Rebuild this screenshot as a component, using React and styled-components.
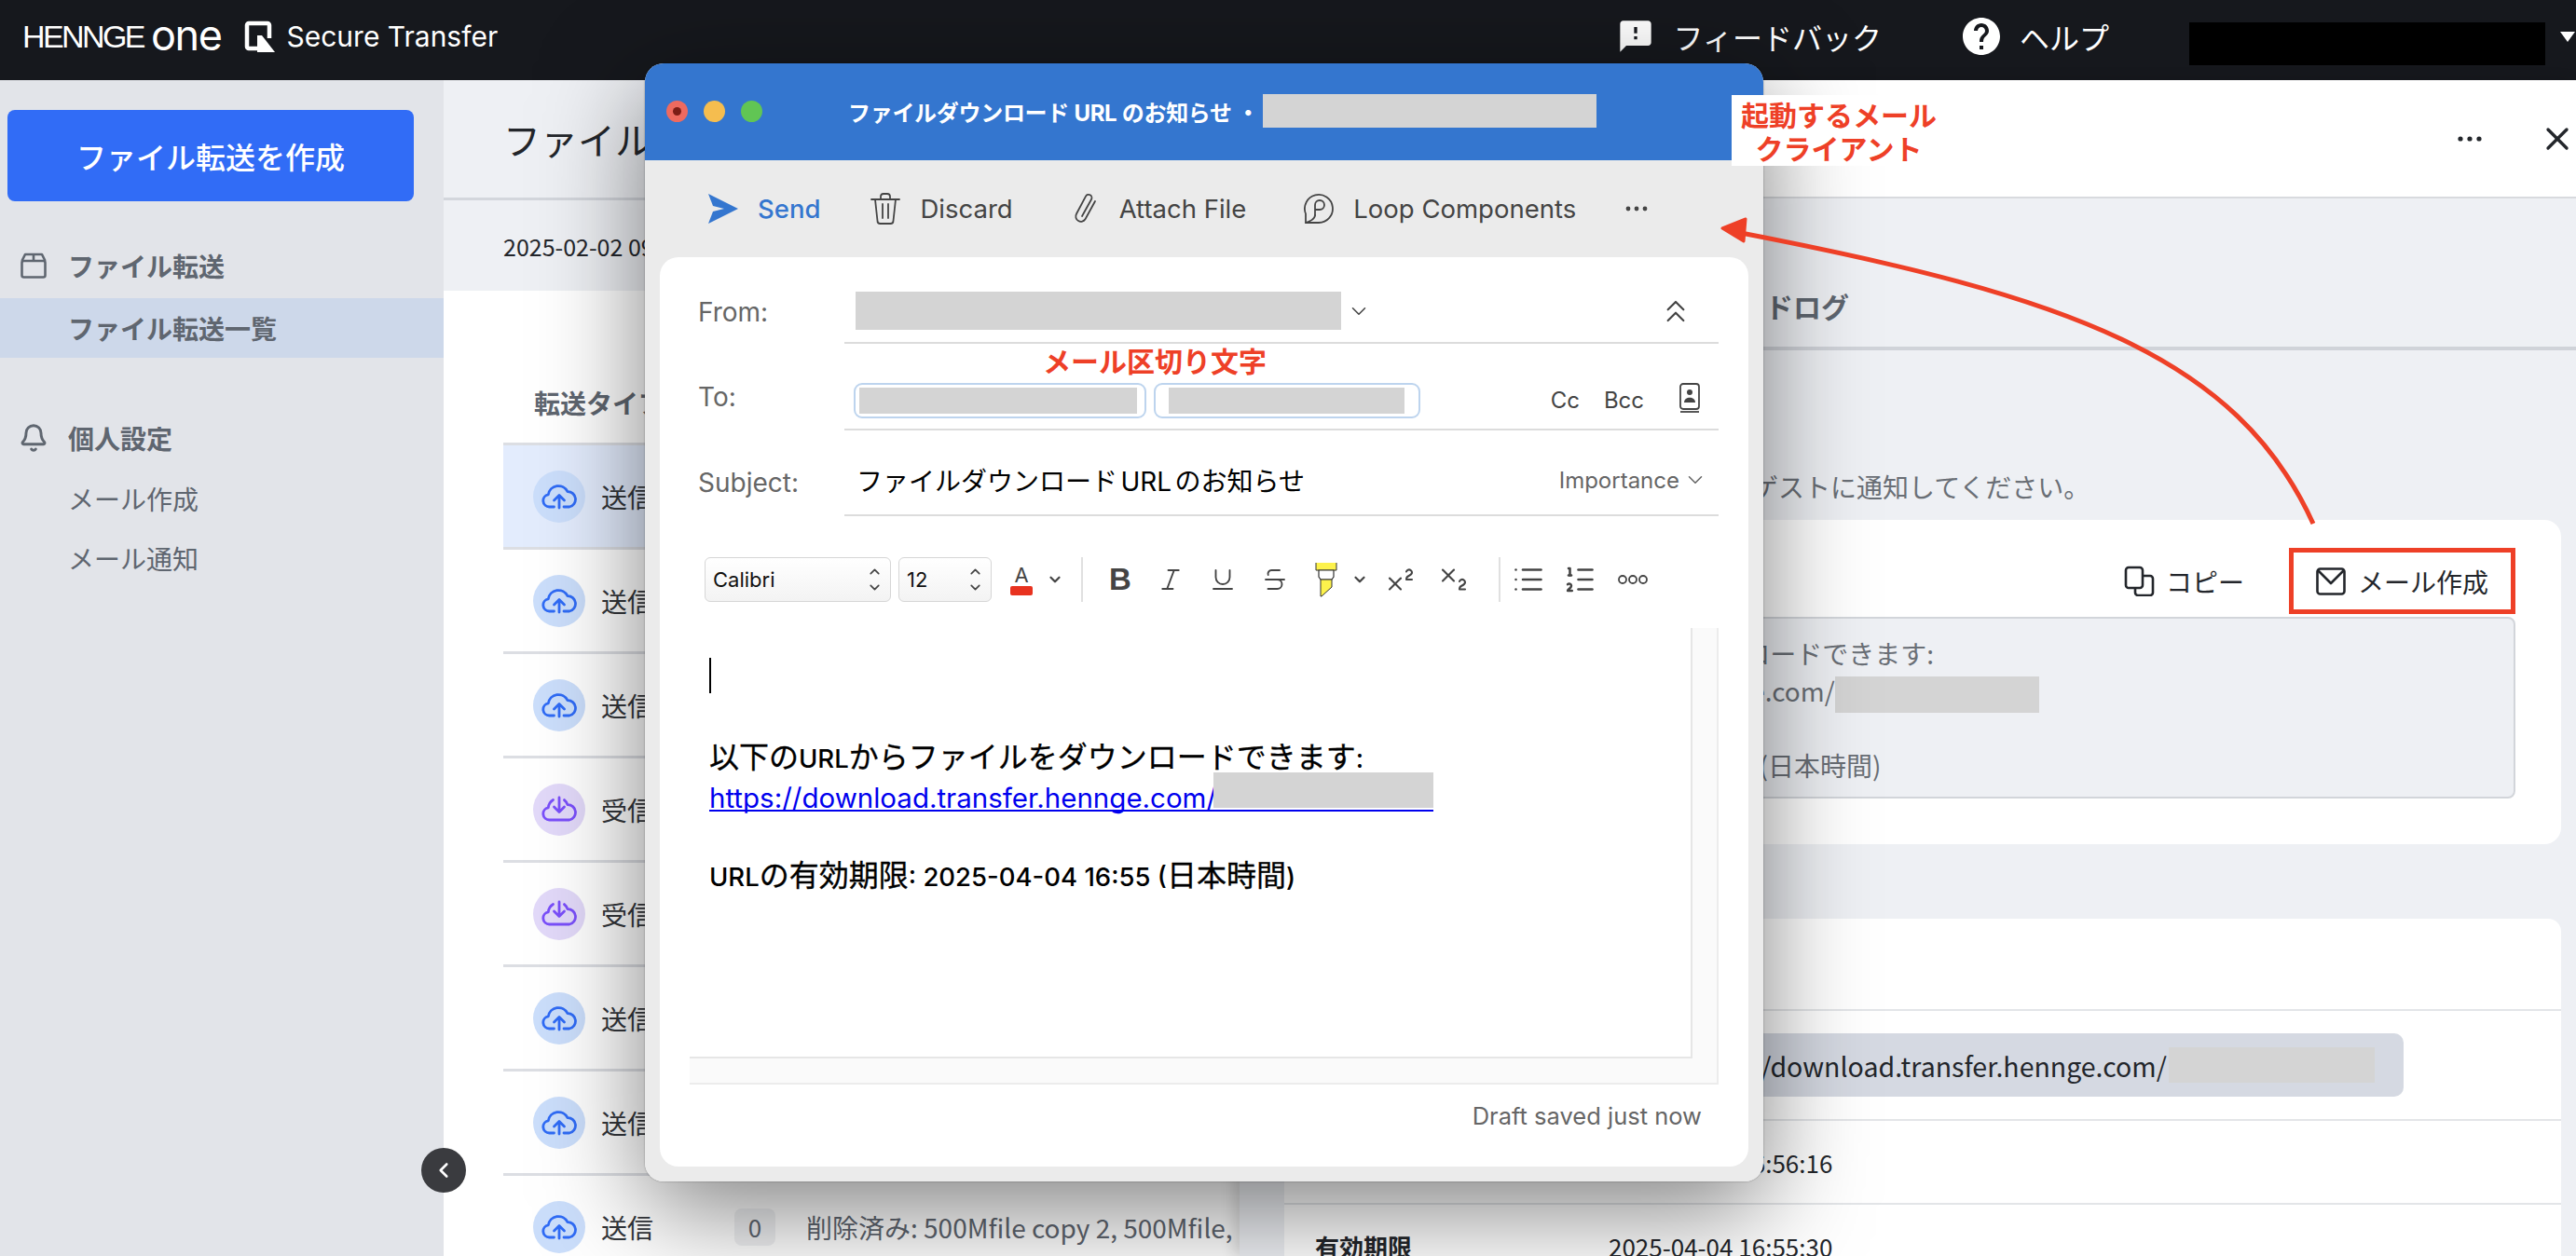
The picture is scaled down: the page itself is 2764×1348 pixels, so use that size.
import React from 'react';
import styled, { createGlobalStyle } from 'styled-components';
import { MdFeedback, MdHelp } from 'react-icons/md';
import {
	Bell,
	ChevronDown,
	ChevronLeft,
	ChevronUp,
	ChevronsUp,
	Italic,
	List,
	ListOrdered,
	Strikethrough,
	Subscript,
	Superscript,
	Underline,
	X,
} from 'lucide-react';

const jp = '"Noto Sans CJK JP", "Noto Sans", sans-serif';
const ui = 'Inter, "Noto Sans CJK JP", sans-serif';

const GlobalStyle = createGlobalStyle`
	html, body { margin: 0; padding: 0; background: #fff; }
	* { box-sizing: border-box; }
`;

const Page = styled.div`
	position: relative;
	width: 2764px;
	height: 1348px;
	overflow: hidden;
	display: flex;
	flex-direction: column;
	font-family: ${jp};
`;

/* top bar */
const Header = styled.header`
	flex: 0 0 86px;
	display: flex;
	align-items: center;
	background: #16181d;
	color: #fff;
	padding: 0 1px 8px 24px;
`;
const LogoWord = styled.span`
	font-family: "Liberation Sans", sans-serif;
	font-size: 34px;
	letter-spacing: -2.6px;
	line-height: 1;
`;
const LogoOne = styled.span`
	font-family: Inter, sans-serif;
	font-size: 45px;
	font-weight: 400;
	letter-spacing: -1.4px;
	line-height: 1;
	margin: 0 0 4px 8px;
`;
const ProductIcon = styled.svg`
	width: 33px;
	height: 34px;
	margin-left: 25px;
`;
const ProductName = styled.span`
	font-family: Inter, sans-serif;
	font-size: 30px;
	margin-left: 12px;
`;
const HeaderRight = styled.div`
	margin-left: auto;
	display: flex;
	align-items: center;
	font-size: 32px;
`;
const HeaderLink = styled.div`
	display: flex;
	align-items: center;
	gap: ${(p) => p.$gap}px;
	margin-right: ${(p) => p.$after}px;
`;
const BlackBar = styled.div`
	width: 382px;
	height: 46px;
	margin-top: 16px;
	background: #000;
`;
const Caret = styled.div`
	width: 0;
	height: 0;
	margin-left: 16px;
	border-left: 8px solid transparent;
	border-right: 8px solid transparent;
	border-top: 11px solid #fff;
`;

const Body = styled.div`
	flex: 1;
	display: flex;
	min-height: 0;
`;

/* left menu */
const Sidebar = styled.nav`
	flex: 0 0 476px;
	background: #e2e4e9;
	padding-top: 32px;
	color: #5f6670;
`;
const CreateButton = styled.div`
	margin-left: 8px;
	width: 436px;
	height: 98px;
	border-radius: 8px;
	background: #316cf6;
	color: #fff;
	font-size: 32px;
	font-weight: 500;
	display: flex;
	align-items: center;
	justify-content: center;
`;
const MenuTitle = styled.div`
	height: 64px;
	margin-top: ${(p) => p.$top}px;
	padding-left: 22px;
	display: flex;
	align-items: center;
	gap: 23px;
	font-size: 28px;
	font-weight: 700;
`;
const MenuBell = styled(Bell)`
	margin: 0 -2px;
`;
const MenuItem = styled.div`
	height: 64px;
	margin-top: ${(p) => p.$top || 0}px;
	padding-left: 73px;
	display: flex;
	align-items: center;
	font-size: 28px;
	font-weight: ${(p) => (p.$active ? 700 : 400)};
	background: ${(p) => (p.$active ? '#cdd8ea' : 'transparent')};
`;

/* transfer list */
const ListPane = styled.main`
	flex: 0 0 854px;
	display: flex;
	flex-direction: column;
	background: #fff;
	& > * {
		flex: none;
	}
`;
const ListTitleBar = styled.div`
	height: 129px;
	padding: 0 0 0 64px;
	display: flex;
	align-items: center;
	background: #eef0f4;
	border-bottom: 3px solid #d3d6dc;
	font-size: 40px;
	color: #23262b;
`;
const DateBar = styled.div`
	height: 97px;
	padding-left: 64px;
	display: flex;
	align-items: center;
	background: #eef0f4;
	font-size: 25px;
	color: #23262b;
`;
const ListTable = styled.div`
	margin-left: 64px;
`;
const ListHead = styled.div`
	height: 166px;
	padding: 100px 0 0 33px;
	border-bottom: 3px solid #dcdee3;
	font-size: 28px;
	font-weight: 700;
	color: #5f6670;
`;
const Row = styled.div`
	height: 112px;
	padding-left: 32px;
	display: flex;
	align-items: center;
	background: ${(p) => (p.$selected ? '#e3ecfd' : '#fff')};
	border-bottom: 3px solid #dcdee3;
	font-size: 28px;
	color: #33363b;
`;
const Circle = styled.div`
	width: 56px;
	height: 56px;
	border-radius: 50%;
	display: flex;
	align-items: center;
	justify-content: center;
	background: ${(p) => (p.$down ? '#e2d9f9' : '#cbdefb')};
	color: ${(p) => (p.$down ? '#7a4ffa' : '#2f6bf5')};
	margin-right: 17px;
`;
const TypeLabel = styled.span`
	width: 143px;
`;
const CountBadge = styled.span`
	width: 44px;
	height: 40px;
	border-radius: 8px;
	background: #f0f1f3;
	color: #5f6670;
	font-size: 26px;
	display: flex;
	align-items: center;
	justify-content: center;
	margin-right: 33px;
`;
const RowNote = styled.span`
	font-size: 28px;
	color: #5f6670;
	white-space: nowrap;
`;

/* detail drawer */
const Drawer = styled.aside`
	flex: 1;
	position: relative;
	display: flex;
	flex-direction: column;
	background: #eef0f4;
	box-shadow: -6px 0 14px rgba(0, 0, 0, 0.14);
	& > * {
		flex: none;
	}
`;
const DrawerTop = styled.div`
	height: 127px;
	background: #fff;
	border-bottom: 2px solid #d8dade;
	display: flex;
	align-items: center;
	justify-content: flex-end;
	gap: 59px;
	padding: 0;
	color: #23262b;
`;
const Tabs = styled.div`
	height: 163px;
	padding: 0 0 22px 414px;
	display: flex;
	align-items: flex-end;
	border-bottom: 4px solid #d0d3d9;
	font-size: 30px;
	font-weight: 700;
	color: #5f6670;
`;
const Hint = styled.div`
	height: 182px;
	padding: 124px 0 0 550px;
	font-size: 28px;
	line-height: 44px;
	color: #6a6f76;
	white-space: nowrap;
`;
const ShareCard = styled.section`
	height: 348px;
	margin: 0 16px 80px 48px;
	background: #fff;
	border-radius: 18px;
	padding: 30px 49px 0 48px;
`;
const ShareActions = styled.div`
	display: flex;
	justify-content: flex-end;
	align-items: center;
	gap: 48px;
`;
const ActionText = styled.span`
	font-size: 28px;
	color: #23262b;
`;
const CopyAction = styled.div`
	display: flex;
	align-items: center;
	gap: 12px;
`;
const MailAction = styled.div`
	width: 243px;
	height: 71px;
	padding-left: 24px;
	border: 5px solid #ee4027;
	display: flex;
	align-items: center;
	gap: 13px;
`;
const MessageBox = styled.div`
	height: 195px;
	margin-top: 3px;
	padding: 17px 0 0 26px;
	background: #eef0f4;
	border: 2px solid #d2d5da;
	border-radius: 8px;
	font-size: 28px;
	line-height: 40px;
	color: #6a6f76;
	white-space: nowrap;
`;
const MessageLine = styled.div`
	height: 40px;
`;
const InfoCard = styled.section`
	flex: 1 1 auto !important;
	margin: 0 16px 0 48px;
	background: #fff;
	border-radius: 14px 14px 0 0;
`;
const InfoRow = styled.div`
	height: ${(p) => p.$h}px;
	display: flex;
	align-items: center;
	padding-left: 33px;
	border-top: ${(p) => (p.$first ? 'none' : '2px solid #e3e5e8')};
	font-size: 26px;
	color: #23262b;
`;
const InfoLabel = styled.span`
	flex: 0 0 315px;
	font-weight: 700;
`;
const LinkPill = styled.div`
	height: 68px;
	width: 883px;
	margin-left: -30px;
	padding-left: 105px;
	display: flex;
	align-items: center;
	border-radius: 10px;
	background: #d5d9e2;
	font-size: 28.5px;
	white-space: nowrap;
`;
const Redact = styled.span`
	flex: none;
	display: inline-block;
	vertical-align: middle;
	width: ${(p) => p.$w}px;
	height: ${(p) => p.$h}px;
	margin-left: ${(p) => p.$left || 0}px;
	background: #d4d4d4;
`;
const CollapseButton = styled.div`
	position: absolute;
	left: 452px;
	top: 1232px;
	width: 48px;
	height: 48px;
	border-radius: 50%;
	background: #3a3b3f;
	color: #fff;
	display: flex;
	align-items: center;
	justify-content: center;
`;

/* mail client window */
const ComposeWindow = styled.div`
	position: absolute;
	left: 692px;
	top: 68px;
	width: 1200px;
	height: 1200px;
	border-radius: 20px;
	overflow: hidden;
	display: flex;
	flex-direction: column;
	background: #ebebeb;
`;
const WindowShadow = styled.div`
	position: absolute;
	left: 692px;
	top: 68px;
	width: 1200px;
	height: 1200px;
	border-radius: 20px;
	box-shadow: 0 30px 110px rgba(0, 0, 0, 0.5), 0 0 2px rgba(0, 0, 0, 0.4);
`;
const TitleBar = styled.div`
	flex: 0 0 104px;
	display: flex;
	align-items: center;
	padding: 0 0 2px 23px;
	background: #3476cf;
	color: #fff;
	font-family: ${ui};
	font-size: 24px;
	font-weight: 700;
	white-space: nowrap;
`;
const Lights = styled.div`
	display: flex;
	gap: 17px;
	margin-right: 92px;
`;
const Light = styled.span`
	width: 23px;
	height: 23px;
	border-radius: 50%;
	background: ${(p) => p.$c};
	display: flex;
	align-items: center;
	justify-content: center;
`;
const LightDot = styled.span`
	width: 9px;
	height: 9px;
	border-radius: 50%;
	background: #7c1d16;
`;
const TitleText = styled.span`
	flex: 0 0 445px;
	letter-spacing: -0.3px;
`;
const ComposeBar = styled.div`
	flex: 0 0 104px;
	display: flex;
	align-items: center;
	padding: 0 0 0 68px;
	font-family: ${ui};
	font-size: 27.5px;
	color: #444;
`;
const ComposeAction = styled.div`
	display: flex;
	align-items: center;
	gap: 21px;
	margin-right: ${(p) => p.$after}px;
	color: ${(p) => (p.$primary ? '#3476cf' : '#444')};
	font-weight: ${(p) => (p.$primary ? 500 : 400)};
`;
const MailCard = styled.div`
	flex: 1;
	margin: 0 16px 16px;
	background: #fff;
	border-radius: 20px;
	font-family: ${ui};
	display: flex;
	flex-direction: column;
`;
const Field = styled.div`
	height: ${(p) => p.$h}px;
	display: flex;
`;
const FieldLabel = styled.div`
	flex: 0 0 198px;
	padding: ${(p) => p.$pad};
	padding-left: 41px;
	display: flex;
	align-items: center;
	font-size: 28px;
	color: #666;
`;
const FieldValue = styled.div`
	width: 938px;
	padding: ${(p) => p.$pad};
	display: flex;
	align-items: center;
	border-bottom: 2px solid #dcdcdc;
	color: #444;
`;
const Chip = styled.div`
	height: 38px;
	width: ${(p) => p.$w}px;
	margin-right: 8px;
	padding-left: ${(p) => p.$pad}px;
	border: 2px solid #bdd4ee;
	border-radius: 9px;
	display: flex;
	align-items: center;
`;
const SmallText = styled.span`
	font-size: 24px;
	color: ${(p) => p.$c || '#444'};
	margin-left: ${(p) => p.$left || 0}px;
`;
const SubjectText = styled.span`
	font-size: 28px;
	word-spacing: -4.5px;
	font-weight: 400;
	color: #000;
	margin-left: 13px;
	white-space: nowrap;
`;
const PushRight = styled.div`
	margin-left: auto;
	display: flex;
	align-items: center;
	gap: ${(p) => p.$gap || 0}px;
	padding-right: ${(p) => p.$right}px;
`;
const FromChevron = styled(ChevronDown)`
	margin-left: 6px;
`;
const MenuChevron = styled(ChevronDown)`
	margin-left: ${(p) => p.$left || 0}px;
`;
const FormatBar = styled.div`
	flex: 0 0 120px;
	padding: 16px 0 0 48px;
	display: flex;
	align-items: center;
	color: #444;
`;
const FontSelect = styled.div`
	width: ${(p) => p.$w}px;
	height: 48px;
	margin-right: ${(p) => p.$after}px;
	padding: 0 8px;
	border: 1.5px solid #d6d6d6;
	border-radius: 6px;
	background: linear-gradient(#fff, #f3f3f3);
	display: flex;
	align-items: center;
	justify-content: space-between;
	font-size: 22px;
	color: #111;
`;
const Spinner = styled.span`
	display: flex;
	flex-direction: column;
	color: #444;
`;
const ColorA = styled.div`
	width: 24px;
	display: flex;
	flex-direction: column;
	align-items: center;
	font-size: 22px;
	line-height: 24px;
	margin-left: 20px;
`;
const RedBar = styled.span`
	width: 24px;
	height: 10px;
	border-radius: 2px;
	background: #e8321f;
`;
const Sep = styled.span`
	width: 2px;
	height: 48px;
	background: #e0e0e0;
	margin: ${(p) => p.$m};
`;
const ToolSlot = styled.span`
	flex: 0 0 ${(p) => p.$w}px;
	display: flex;
	align-items: center;
	justify-content: center;
`;
const BoldGlyph = styled.span`
	font-family: "Liberation Sans", sans-serif;
	font-size: 33px;
	font-weight: 700;
	color: #444;
`;
const EditorFrame = styled.div`
	flex: 0 0 490px;
	margin: 0 32px;
	padding: 0 26px 26px 0;
	background: #fafafa;
	border-right: 2px solid #ececec;
	border-bottom: 2px solid #ececec;
`;
const Editor = styled.div`
	height: 100%;
	padding: 32px 0 0 21px;
	background: #fff;
	border-right: 2px solid #e6e6e6;
	border-bottom: 2px solid #e6e6e6;
	font-family: ${jp};
	font-size: 32px;
	font-weight: 400;
	-webkit-text-stroke: 0.3px #000;
	line-height: 43px;
	color: #000;
	white-space: nowrap;
`;
const Latin = styled.span`
	font-family: Inter, sans-serif;
	font-size: 27.5px;
	font-weight: 500;
	-webkit-text-stroke: 0;
`;
const TextCaret = styled.div`
	width: 2px;
	height: 38px;
	background: #000;
	margin-bottom: 45px;
`;
const BodyLink = styled.div`
	position: relative;
	width: 777px;
	height: 35px;
	margin-bottom: 45px;
	font-family: Inter, sans-serif;
	font-size: 29.5px;
	line-height: 41px;
	color: #0000ee;
	-webkit-text-stroke: 0;
	border-bottom: 2px solid #0000ee;
`;
const LinkCover = styled.span`
	position: absolute;
	right: 0;
	top: -7px;
	width: 236px;
	height: 38px;
	background: #d4d4d4;
`;
const Footer = styled.div`
	flex: 1;
	padding: 0 50px 22px 0;
	display: flex;
	align-items: center;
	justify-content: flex-end;
	font-size: 25.5px;
	color: #666;
`;

/* annotations laid over the screenshot */
const ClientNote = styled.div`
	position: absolute;
	left: 1858px;
	top: 102px;
	width: 230px;
	height: 76px;
	background: #fff;
	color: #ee4027;
	font-size: 30px;
	font-weight: 700;
	line-height: 36px;
	text-align: center;
	padding-top: 2px;
	white-space: nowrap;
`;
const SeparatorNote = styled.div`
	position: absolute;
	left: 1119px;
	top: 364px;
	color: #ee4027;
	font-size: 30px;
	font-weight: 700;
	line-height: 44px;
	white-space: nowrap;
`;
const ArrowLayer = styled.svg`
	position: absolute;
	left: 0;
	top: 0;
	pointer-events: none;
`;

const Dots = ({ size = 30, r = 2.6, gap = 10 }) => (
	<svg width={size} height={size} viewBox={`0 0 ${size} ${size}`} fill="currentColor">
		<circle cx={size / 2 - gap} cy={size / 2} r={r} />
		<circle cx={size / 2} cy={size / 2} r={r} />
		<circle cx={size / 2 + gap} cy={size / 2} r={r} />
	</svg>
);

const CloudUp = () => (
	<svg width="38" height="30" viewBox="0 0 38 30" fill="none" stroke="currentColor" strokeWidth="2.8" strokeLinecap="round" strokeLinejoin="round">
		<path d="M13.5 26H8.5a6.6 6.6 0 0 1-1.2-13.1A11 11 0 0 1 28 9.6a8.3 8.3 0 0 1 2 16.4h-6" />
		<path d="M19 27V14M13.5 19l5.5-5.5 5.5 5.5" />
	</svg>
);

const CloudDown = () => (
	<svg width="38" height="30" viewBox="0 0 38 30" fill="none" stroke="currentColor" strokeWidth="2.8" strokeLinecap="round" strokeLinejoin="round">
		<path d="M12.5 4.5A11 11 0 0 0 7.3 12.9 6.6 6.6 0 0 0 8.5 26h21.5a8.3 8.3 0 0 0-2-16.4 11 11 0 0 0-3.5-5" />
		<path d="M19 2V17M13.5 12l5.5 5.5 5.5-5.5" />
	</svg>
);

const SendIcon = () => (
	<svg width="32" height="32" viewBox="0 0 32 32" fill="#3476cf">
		<path d="M0 0 32 16 0 32 5 19 17 16 5 13Z" />
	</svg>
);

const TrashIcon = () => (
	<svg width="32" height="34" viewBox="0 0 32 34" fill="none" stroke="#444" strokeWidth="1.8" strokeLinecap="round" strokeLinejoin="round">
		<path d="M1 7h30M11 7V4a3 3 0 0 1 3-3h4a3 3 0 0 1 3 3v3M5 7l2.5 23a3 3 0 0 0 3 3h11a3 3 0 0 0 3-3L27 7M13 12v15M19 12v15" />
	</svg>
);

const ClipIcon = () => (
	<svg width="30" height="34" viewBox="0 0 30 34" fill="none" stroke="#444" strokeWidth="1.8" strokeLinecap="round" strokeLinejoin="round">
		<path d="M11 25 21 7a3.4 3.4 0 0 0-6-3.400L5 22.500a5.500 5.500 0 0 0 9.600 5.500L25 9" />
	</svg>
);

const LoopIcon = () => (
	<svg width="32" height="34" viewBox="0 0 32 34" fill="none" stroke="#444" strokeWidth="1.8" strokeLinecap="round" strokeLinejoin="round">
		<path d="M2 32h14a15 15 0 1 0-14-9.5V32Z" />
		<path d="M12 24V13a5 5 0 1 1 5 5h-5" />
		<path d="M2 32c4-1 10-4 10-8" />
	</svg>
);

const ContactIcon = () => (
	<svg width="22" height="32" viewBox="0 0 22 32" fill="none" stroke="#444" strokeWidth="1.8">
		<rect x="1" y="1" width="20" height="27" rx="3" />
		<path d="M1 31h20" />
		<circle cx="11" cy="10" r="3" fill="#444" stroke="none" />
		<path d="M5 21c0-7 12-7 12 0Z" fill="#444" stroke="none" />
	</svg>
);

const HighlightIcon = () => (
	<svg width="24" height="38" viewBox="0 0 24 38">
		<path d="M1 1v8h22V1" fill="#fdf24c" stroke="#333" strokeWidth="1" />
		<path d="M4 9h16v7l-2 3H6l-2-3Z" fill="#fff" stroke="#333" strokeWidth="1.2" />
		<path d="M6 19h12v8l-11 10H6Z" fill="#fdf24c" stroke="#333" strokeWidth="1" />
	</svg>
);

const RingsIcon = () => (
	<svg width="34" height="14" viewBox="0 0 34 14" fill="none" stroke="#444" strokeWidth="1.8">
		<circle cx="6" cy="7" r="4" />
		<circle cx="17" cy="7" r="4" />
		<circle cx="28" cy="7" r="4" />
	</svg>
);

const BoxIcon = () => (
	<svg width="28" height="28" viewBox="0 0 28 28" fill="none" stroke="currentColor" strokeWidth="2.6" strokeLinejoin="round">
		<rect x="1.5" y="9" width="25" height="17.5" rx="2" />
		<path d="M1.5 9 5 2h18l3.5 7M14 2v7" />
	</svg>
);

const CopyIcon = () => (
	<svg width="33" height="33" viewBox="0 0 33 33" fill="none" stroke="#23262b" strokeWidth="2.6" strokeLinejoin="round">
		<rect x="2" y="2" width="18" height="22" rx="3" />
		<path d="M20 11h8a3 3 0 0 1 3 3v15a3 3 0 0 1-3 3H15a3 3 0 0 1-3-3v-5" />
	</svg>
);

const MailIcon = () => (
	<svg width="32" height="30" viewBox="0 0 32 30" fill="none" stroke="#23262b" strokeWidth="2.6" strokeLinejoin="round">
		<rect x="1.5" y="1.5" width="29" height="27" rx="3" />
		<path d="M2 3 16 17 30 3" />
	</svg>
);

const rowKinds = ['up', 'up', 'up', 'down', 'down', 'up', 'up', 'up'];

export default function App() {
	return (
		<>
			<GlobalStyle />
			<Page>
				<Header>
					<LogoWord>HENNGE</LogoWord>
					<LogoOne>one</LogoOne>
					<ProductIcon viewBox="0 0 33 34">
						<path d="M14 30H5a2 2 0 0 1-2-2V5a2 2 0 0 1 2-2h20a2 2 0 0 1 2 2v14" fill="none" stroke="#fff" strokeWidth="4.5" />
						<path d="M14 16h5l14 18H14Z" fill="#fff" />
					</ProductIcon>
					<ProductName>Secure Transfer</ProductName>
					<HeaderRight>
						<HeaderLink $gap={21} $after={83}>
							<MdFeedback size={40} />
							<span>フィードバック</span>
						</HeaderLink>
						<HeaderLink $gap={17} $after={86}>
							<MdHelp size={48} />
							<span>ヘルプ</span>
						</HeaderLink>
						<BlackBar />
						<Caret />
					</HeaderRight>
				</Header>
				<Body>
					<Sidebar>
						<CreateButton>ファイル転送を作成</CreateButton>
						<MenuTitle $top={37}>
							<BoxIcon />
							<span>ファイル転送</span>
						</MenuTitle>
						<MenuItem $active $top={3}>ファイル転送一覧</MenuItem>
						<MenuTitle $top={54}>
							<MenuBell size={32} strokeWidth={2.2} />
							<span>個人設定</span>
						</MenuTitle>
						<MenuItem $top={1}>メール作成</MenuItem>
						<MenuItem>メール通知</MenuItem>
					</Sidebar>
					<ListPane>
						<ListTitleBar>ファイル転送一覧</ListTitleBar>
						<DateBar>2025-02-02 09:00</DateBar>
						<ListTable>
							<ListHead>転送タイプ</ListHead>
							{rowKinds.map((kind, i) => (
								<Row key={i} $selected={i === 0}>
									<Circle $down={kind === 'down'}>{kind === 'down' ? <CloudDown /> : <CloudUp />}</Circle>
									<TypeLabel>{kind === 'down' ? '受信' : '送信'}</TypeLabel>
									{i === 7 && (
										<>
											<CountBadge>0</CountBadge>
											<RowNote>削除済み: 500Mfile copy 2, 500Mfile,</RowNote>
										</>
									)}
								</Row>
							))}
						</ListTable>
					</ListPane>
					<Drawer>
						<DrawerTop>
							<Dots />
							<X size={40} strokeWidth={2} />
						</DrawerTop>
						<Tabs>ダウンロードログ</Tabs>
						<Hint>ゲストに通知してください。</Hint>
						<ShareCard>
							<ShareActions>
								<CopyAction>
									<CopyIcon />
									<ActionText>コピー</ActionText>
								</CopyAction>
								<MailAction>
									<MailIcon />
									<ActionText>メール作成</ActionText>
								</MailAction>
							</ShareActions>
							<MessageBox>
								<MessageLine>以下のURLからファイルをダウンロードできます:</MessageLine>
								<MessageLine>
									https://download.transfer.hennge.com/
									<Redact $w={219} $h={39} />
								</MessageLine>
								<MessageLine />
								<MessageLine>URLの有効期限: 2025-04-04 16:55 (日本時間)</MessageLine>
							</MessageBox>
						</ShareCard>
						<InfoCard>
							<InfoRow $first $h={97} />
							<InfoRow $h={118}>
								<InfoLabel>URL</InfoLabel>
								<LinkPill>
									https://download.transfer.hennge.com/
									<Redact $w={221} $h={38} $left={2} />
								</LinkPill>
							</InfoRow>
							<InfoRow $h={90}>
								<InfoLabel>作成日時</InfoLabel>
								<span>2025-02-02 16:56:16</span>
							</InfoRow>
							<InfoRow $h={90}>
								<InfoLabel>有効期限</InfoLabel>
								<span>2025-04-04 16:55:30</span>
							</InfoRow>
						</InfoCard>
					</Drawer>
				</Body>
				<CollapseButton>
					<ChevronLeft size={26} strokeWidth={2.4} />
				</CollapseButton>
				<WindowShadow />
				<ComposeWindow>
					<TitleBar>
						<Lights>
							<Light $c="#ee6a5f">
								<LightDot />
							</Light>
							<Light $c="#f5bd4f" />
							<Light $c="#61c554" />
						</Lights>
						<TitleText>ファイルダウンロード URL のお知らせ ・</TitleText>
						<Redact $w={358} $h={36} />
					</TitleBar>
					<ComposeBar>
						<ComposeAction $primary $after={54}>
							<SendIcon />
							<span>Send</span>
						</ComposeAction>
						<ComposeAction $after={63}>
							<TrashIcon />
							<span>Discard</span>
						</ComposeAction>
						<ComposeAction $after={62}>
							<ClipIcon />
							<span>Attach File</span>
						</ComposeAction>
						<ComposeAction $after={48}>
							<LoopIcon />
							<span>Loop Components</span>
						</ComposeAction>
						<Dots size={34} r={2.4} gap={9} />
					</ComposeBar>
					<MailCard>
						<Field $h={93}>
							<FieldLabel $pad="24px 0 0">From:</FieldLabel>
							<FieldValue $pad="24px 0 0">
								<Redact $w={521} $h={41} $left={12} />
								<FromChevron size={26} strokeWidth={1.4} />
								<PushRight $right={26}>
									<ChevronsUp size={40} strokeWidth={1.3} />
								</PushRight>
							</FieldValue>
						</Field>
						<Field $h={93}>
							<FieldLabel $pad="20px 0 0">To:</FieldLabel>
							<FieldValue $pad="30px 0 0 10px">
								<Chip $w={314} $pad={4}>
									<Redact $w={298} $h={28} />
								</Chip>
								<Chip $w={286} $pad={14}>
									<Redact $w={253} $h={28} />
								</Chip>
								<PushRight $right={20}>
									<SmallText>Cc</SmallText>
									<SmallText $left={26}>Bcc</SmallText>
									<SmallText $left={38}>
										<ContactIcon />
									</SmallText>
								</PushRight>
							</FieldValue>
						</Field>
						<Field $h={92}>
							<FieldLabel $pad="20px 0 0">Subject:</FieldLabel>
							<FieldValue $pad="16px 0 0">
								<SubjectText>ファイルダウンロード URL のお知らせ</SubjectText>
								<PushRight $right={12} $gap={4}>
									<SmallText $c="#666">Importance</SmallText>
									<ChevronDown size={26} strokeWidth={1.4} color="#666" />
								</PushRight>
							</FieldValue>
						</Field>
						<FormatBar>
							<FontSelect $w={200} $after={8}>
								<span>Calibri</span>
								<Spinner>
									<ChevronUp size={17} strokeWidth={2.4} />
									<ChevronDown size={17} strokeWidth={2.4} />
								</Spinner>
							</FontSelect>
							<FontSelect $w={100} $after={0}>
								<span>12</span>
								<Spinner>
									<ChevronUp size={17} strokeWidth={2.4} />
									<ChevronDown size={17} strokeWidth={2.4} />
								</Spinner>
							</FontSelect>
							<ColorA>
								A
								<RedBar />
							</ColorA>
							<MenuChevron size={18} strokeWidth={3} $left={15} />
							<Sep $m="0 22px 0 19px" />
							<ToolSlot $w={36}><BoldGlyph>B</BoldGlyph></ToolSlot>
							<ToolSlot $w={72}><Italic size={30} strokeWidth={1.5} /></ToolSlot>
							<ToolSlot $w={40}><Underline size={30} strokeWidth={1.5} /></ToolSlot>
							<ToolSlot $w={72}><Strikethrough size={30} strokeWidth={1.5} /></ToolSlot>
							<ToolSlot $w={38}><HighlightIcon /></ToolSlot>
							<ToolSlot $w={34}><ChevronDown size={18} strokeWidth={3} /></ToolSlot>
							<ToolSlot $w={54}><Superscript size={36} strokeWidth={1.4} /></ToolSlot>
							<ToolSlot $w={60}><Subscript size={36} strokeWidth={1.4} /></ToolSlot>
							<Sep $m="0 12px 0 18px" />
							<ToolSlot $w={36}><List size={36} strokeWidth={1.7} /></ToolSlot>
							<ToolSlot $w={74}><ListOrdered size={36} strokeWidth={1.7} /></ToolSlot>
							<ToolSlot $w={40}><RingsIcon /></ToolSlot>
						</FormatBar>
						<EditorFrame>
							<Editor>
								<TextCaret />
								<div>以下の<Latin>URL</Latin>からファイルをダウンロードできます<Latin>:</Latin></div>
								<BodyLink>
									https://download.transfer.hennge.com/
									<LinkCover />
								</BodyLink>
								<div><Latin>URL</Latin>の有効期限<Latin>: 2025-04-04 16:55 (</Latin>日本時間<Latin>)</Latin></div>
							</Editor>
						</EditorFrame>
						<Footer>Draft saved just now</Footer>
					</MailCard>
				</ComposeWindow>
				<ClientNote>
					起動するメール
					<br />
					クライアント
				</ClientNote>
				<SeparatorNote>メール区切り文字</SeparatorNote>
				<ArrowLayer width="2764" height="1348" viewBox="0 0 2764 1348">
					<path d="M2482 562C2400 382 2220 318 1868 250" fill="none" stroke="#ee4027" strokeWidth="5" />
					<path d="M1848 245 1873 235 1871 259Z" fill="#ee4027" stroke="#ee4027" strokeWidth="3" strokeLinejoin="round" />
				</ArrowLayer>
			</Page>
		</>
	);
}
